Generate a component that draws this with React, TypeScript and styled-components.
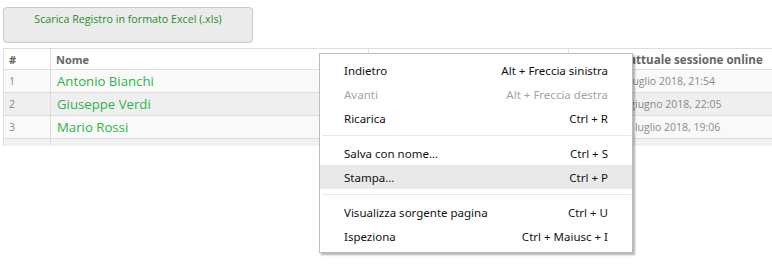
import React from 'react';
import styled, { createGlobalStyle } from 'styled-components';

const GlobalStyle = createGlobalStyle`
  html, body {
    margin: 0;
    padding: 0;
    background: #fff;
  }
  body {
    font-family: "Open Sans", "Liberation Sans", sans-serif;
  }
`;

const Page = styled.div`
  position: relative;
  width: 772px;
  height: 266px;
  overflow: hidden;
  padding: 7px 0 0 3px;
  box-sizing: border-box;
`;

const ExportButton = styled.button`
  display: block;
  width: 250px;
  height: 36px;
  padding: 0 0 12px;
  box-sizing: border-box;
  background: #ebebeb;
  border: 1px solid #c9c9c9;
  border-radius: 4px;
  font-family: "Open Sans", sans-serif;
  font-size: 10.7px;
  color: #1f8f1f;
  text-align: center;
  line-height: 15px;
`;

const TableWrap = styled.div`
  margin-top: 5px;
  height: 98px;
  overflow: hidden;
`;

const Table = styled.table`
  border-collapse: collapse;
  width: 780px;
  table-layout: fixed;
  border-top: 1px solid #ddd;
  border-left: 1px solid #ddd;
`;

const HeadCell = styled.th<{ $w: number; $size?: number }>`
  box-sizing: border-box;
  width: ${(p) => p.$w}px;
  height: 21px;
  padding: 0 5px;
  text-align: left;
  font-size: ${(p) => p.$size ?? 11}px;
  font-weight: 700;
  color: #666;
  border-right: 1px solid #ddd;
  border-bottom: 1px solid #ddd;
  white-space: nowrap;
  overflow: hidden;
`;

const Row = styled.tr<{ $shade: string }>`
  background: ${(p) => p.$shade};
`;

const Cell = styled.td`
  height: 22px;
  padding: 0 5px;
  font-size: 10.5px;
  color: #858a90;
  border-right: 1px solid #ddd;
  border-bottom: 1px solid #ddd;
  white-space: nowrap;
  overflow: hidden;
`;

const NameLink = styled.a`
  font-size: 13.2px;
  color: #2fb34a;
  text-decoration: none;
  padding-left: 1px;
`;

const Menu = styled.div`
  position: absolute;
  left: 319px;
  top: 53px;
  width: 314px;
  padding: 4px 0 4px;
  box-sizing: border-box;
  background: #fff;
  border: 1px solid #bcbcbc;
  box-shadow: 2px 2px 2px rgba(0, 0, 0, 0.3);
  font-family: "Noto Sans", "Liberation Sans", sans-serif;
  font-size: 11.5px;
`;

const MenuItem = styled.div<{ $disabled?: boolean; $active?: boolean }>`
  display: flex;
  justify-content: space-between;
  align-items: center;
  height: 24px;
  padding: 0 24px;
  color: ${(p) => (p.$disabled ? '#a3a3a3' : '#111')};
  background: ${(p) => (p.$active ? '#e9e9e9' : 'transparent')};
`;

const Separator = styled.div`
  height: 1px;
  margin: 5px 1px 5px 2px;
  background: #e9e9e9;
`;

const rows = [
  { n: 1, name: 'Antonio Bianchi', date: 'Martedì 17 luglio 2018, 21:54', shade: '#f9f9f9' },
  { n: 2, name: 'Giuseppe Verdi', date: 'Venerdì 29 giugno 2018, 22:05', shade: '#efefef' },
  { n: 3, name: 'Mario Rossi', date: 'Domenica 8 luglio 2018, 19:06', shade: '#f9f9f9' },
  { n: 4, name: '', date: '', shade: '#f1f1f1' },
];

type Item = { label: string; key: string; disabled?: boolean; active?: boolean } | 'sep';

const items: Item[] = [
  { label: 'Indietro', key: 'Alt + Freccia sinistra' },
  { label: 'Avanti', key: 'Alt + Freccia destra', disabled: true },
  { label: 'Ricarica', key: 'Ctrl + R' },
  'sep',
  { label: 'Salva con nome...', key: 'Ctrl + S' },
  { label: 'Stampa...', key: 'Ctrl + P', active: true },
  'sep',
  { label: 'Visualizza sorgente pagina', key: 'Ctrl + U' },
  { label: 'Ispeziona', key: 'Ctrl + Maiusc + I' },
];

const App: React.FC = () => {
  return (
    <Page>
      <GlobalStyle />
      <ExportButton>Scarica Registro in formato Excel (.xls)</ExportButton>
      <TableWrap>
        <Table>
          <thead>
            <tr>
              <HeadCell $w={47}>#</HeadCell>
              <HeadCell $w={318}>Nome</HeadCell>
              <HeadCell $w={200}></HeadCell>
              <HeadCell $w={215} $size={11.6}>
                Data dell&apos;attuale sessione online
              </HeadCell>
            </tr>
          </thead>
          <tbody>
            {rows.map((r) => (
              <Row key={r.n} $shade={r.shade}>
                <Cell>{r.name ? r.n : ''}</Cell>
                <Cell>
                  <NameLink href="#">{r.name}</NameLink>
                </Cell>
                <Cell></Cell>
                <Cell>{r.date}</Cell>
              </Row>
            ))}
          </tbody>
        </Table>
      </TableWrap>
      <Menu>
        {items.map((it, i) =>
          it === 'sep' ? (
            <Separator key={i} />
          ) : (
            <MenuItem key={i} $disabled={it.disabled} $active={it.active}>
              <span>{it.label}</span>
              <span>{it.key}</span>
            </MenuItem>
          )
        )}
      </Menu>
    </Page>
  );
};

export default App;
